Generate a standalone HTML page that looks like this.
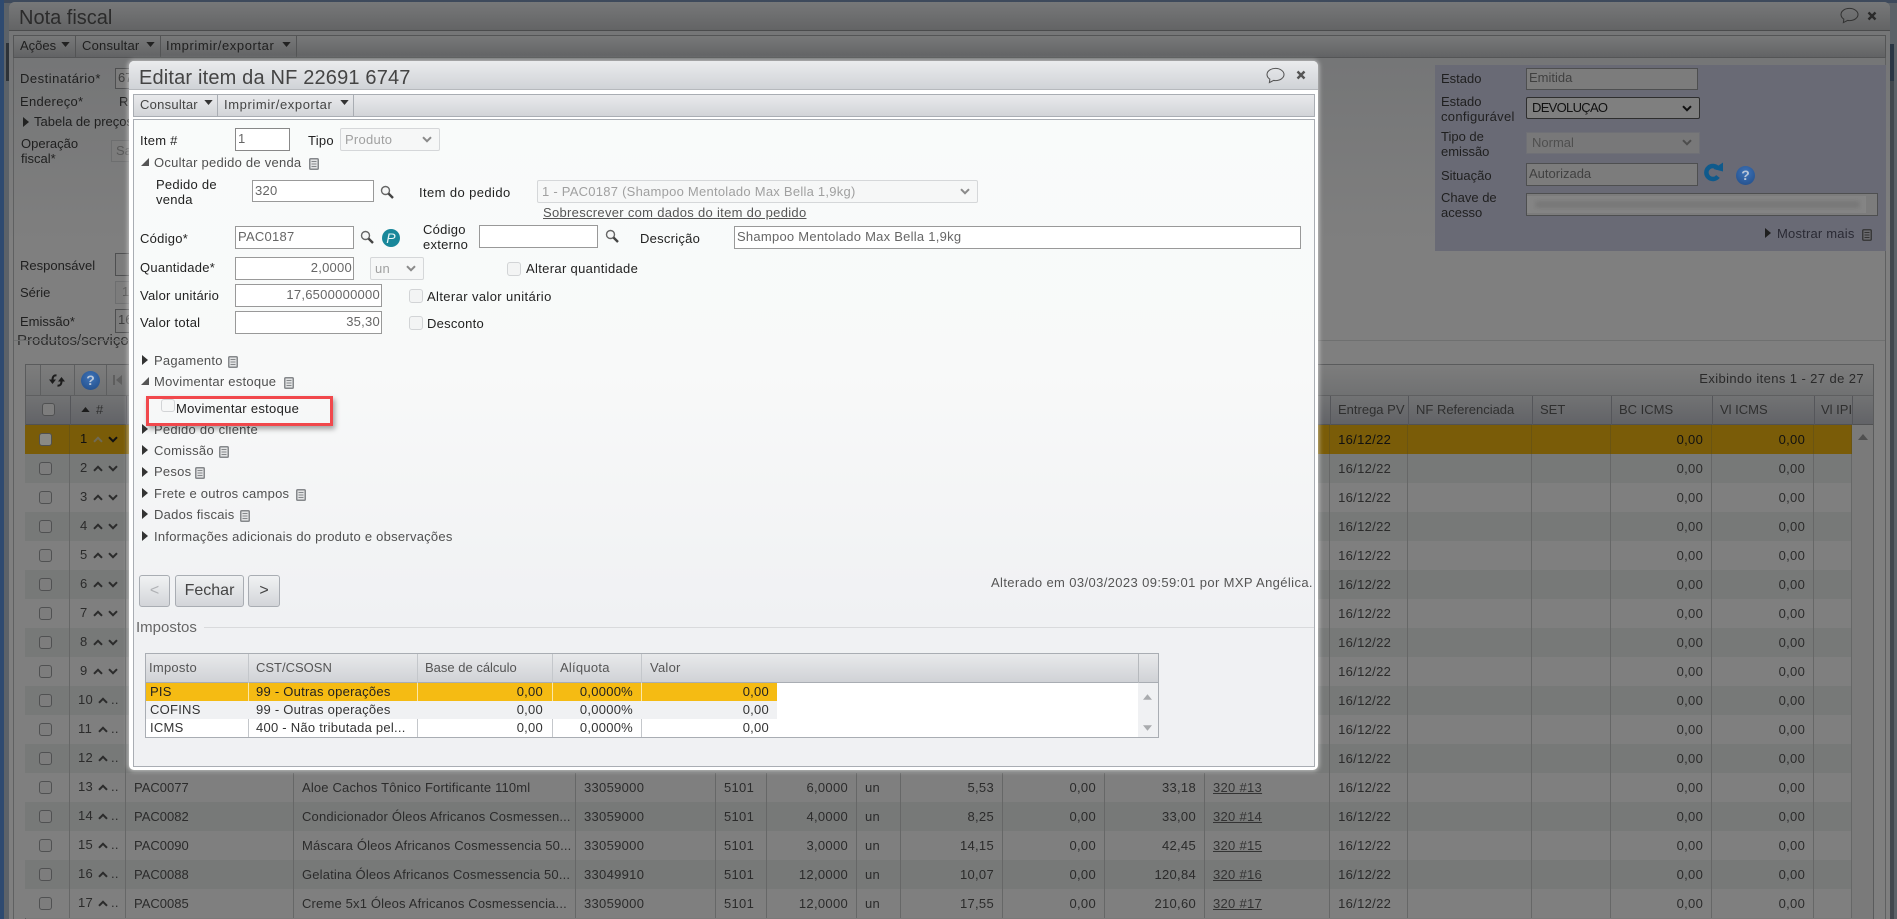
<!DOCTYPE html>
<html lang="pt-BR"><head><meta charset="utf-8"><title>Editar item da NF</title>
<style>
html,body{margin:0;padding:0;width:1897px;height:919px;overflow:hidden;background:#7f7f7f;font:13px/16px "Liberation Sans",Arial,sans-serif;color:#222;letter-spacing:.25px}
.a,.t,.in,svg.i{position:absolute}
.t{white-space:nowrap;line-height:16px}
.b{color:#1f1f1f;letter-spacing:0}
.in{box-sizing:border-box;border:1px solid #a3a6a9;background:#fff;padding-left:2px;color:#666;white-space:nowrap;overflow:hidden}
.bi{box-sizing:border-box;border:1px solid #4e4f50;background:#7c7c7c;color:#3d3d3d;padding-left:2px;position:absolute;white-space:nowrap;overflow:hidden;letter-spacing:0}
.dis{box-sizing:border-box;position:absolute;border:1px solid #d5d7d9;border-radius:2px;background:#f6f7f7;color:#a0a0a0;padding-left:4px;white-space:nowrap}
.cb{position:absolute;box-sizing:border-box;width:14px;height:14px;border:1px solid #d2d4d6;border-radius:3px;background:#f3f4f4}
.sec{color:#505050}
.grid td{box-sizing:border-box;height:29px;padding:0 8px;border-right:1px solid #666767;color:#2b2b2b;white-space:nowrap;overflow:hidden;position:relative;letter-spacing:.3px}
.grid td:nth-last-child(16){letter-spacing:0}
.grid td:nth-last-child(15){letter-spacing:.17px}
.grid td:nth-last-child(5){letter-spacing:.65px}
.grid{position:absolute;left:25px;top:425px;width:1827px;border-collapse:separate;border-spacing:0;table-layout:fixed;font-size:13px}
.grid tr:nth-child(odd){background:#7f7f7f}
.grid tr:nth-child(even){background:#777978}
.grid tr.sel{background:#7a5c08;color:#111}
.grid tr.sel td{color:#111;border-right-color:#6a5412}
.grid .r{text-align:right}
.grid u{color:#333}
.ck{position:absolute;left:14px;top:8px;width:13px;height:13px;box-sizing:border-box;border:1.5px solid #505152;border-radius:3px;background:#7d7d7d}
.sel .ck{background:#8a8a85}
.grid b{position:absolute;left:10px;top:6px;font-weight:normal}
.grid b.w{left:8px}
.grid svg{position:absolute;top:11px;width:10px;height:7px}
.grid .u{left:23px}.grid .v{left:38px}.grid .x{left:28px}
.grid em{position:absolute;left:41px;top:6px;font-style:normal}
.hd{color:#2f2f2f;letter-spacing:0}
.tx{position:absolute;left:145px;top:653px;width:1014px;height:85px;box-sizing:border-box;border:1px solid #a9adb3;background:#fff}
.tx div{position:absolute;white-space:nowrap;color:#333;line-height:18px}
.help{position:absolute;border-radius:50%;background:radial-gradient(circle at 50% 35%,#3f74b8,#1f4a86);color:#b8c6d8;font-weight:bold;text-align:center;width:19px;height:19px;line-height:19px;font-size:14px;letter-spacing:0}
.btn{position:absolute;box-sizing:border-box;top:575px;height:32px;border:1px solid #a9adb3;border-radius:3px;background:linear-gradient(#f1f2f3,#d3d5d9);text-align:center;color:#444;line-height:30px;font-size:16px;letter-spacing:0}
</style></head><body>
<svg width="0" height="0" style="position:absolute"><defs>
<symbol id="doc" viewBox="0 0 10 12"><rect x=".75" y=".75" width="8.5" height="10.5" rx="1" fill="#e2e3e4" stroke="#85888b" stroke-width="1.5"/><path d="M2.5 3.5h5M2.5 6h5M2.5 8.5h5" stroke="#85888b"/></symbol>
<symbol id="docd" viewBox="0 0 10 12"><rect x=".75" y=".75" width="8.5" height="10.5" rx="1" fill="#6a6a6e" stroke="#333" stroke-width="1.3"/><path d="M2.5 3.5h5M2.5 6h5M2.5 8.5h5" stroke="#333"/></symbol>
<symbol id="search" viewBox="0 0 14 14"><circle cx="5.5" cy="5.5" r="4" fill="#f6f7f7" stroke="#666" stroke-width="1.4"/><path d="M8.5 8.5L13 13" stroke="#444" stroke-width="2.4"/></symbol>
<symbol id="chat" viewBox="0 0 20 18"><path d="M10 1.5c-5 0-9 2.800-9 6.500 0 2 1.200 3.700 3 4.900L3.500 16.500l4.500-2.300c.7.100 1.300.2 2 .2 5 0 9-2.900 9-6.400S15 1.500 10 1.500z" fill="none" stroke="currentColor" stroke-width="1.100"/></symbol>
<symbol id="close" viewBox="0 0 10 10"><path d="M1.500 1.500l7 7M8.500 1.500l-7 7" stroke="currentColor" stroke-width="2.400"/></symbol>
<symbol id="chev" viewBox="0 0 10 7"><path d="M1 1.200l4 4 4-4" fill="none" stroke="currentColor" stroke-width="2"/></symbol>
<symbol id="up" viewBox="0 0 10 7"><path d="M1 5.800l4-4 4 4" fill="none" stroke="currentColor" stroke-width="2"/></symbol>
<symbol id="car" viewBox="0 0 10 6"><path d="M0 0h10L5 6z" fill="currentColor"/></symbol>
<symbol id="tr" viewBox="0 0 6 10"><path d="M0 0l6 5-6 5z" fill="currentColor"/></symbol>
<symbol id="te" viewBox="0 0 8 8"><path d="M8 0v8H0z" fill="currentColor"/></symbol>
</defs></svg>

<!-- page edges -->
<div class="a" style="left:0;top:0;width:1897px;height:919px;background:#5c6268"></div>
<div class="a" style="left:0;top:0;width:1897px;height:3px;background:#3e4a5c"></div>
<div class="a" style="left:0;top:0;width:4px;height:919px;background:#2e4a70"></div>
<div class="a" style="left:6px;top:43px;width:3px;height:38px;background:#2d3238"></div>
<div class="a" style="left:1890px;top:44px;width:4px;height:875px;background:#42484e"></div>
<div class="a" style="left:1890px;top:44px;width:4px;height:37px;background:#2a3644"></div>

<!-- main window -->
<div class="a" style="left:9px;top:2px;width:1881px;height:917px;background:linear-gradient(#757677 60px,#7f7f7f 240px);border-radius:6px 6px 0 0"></div>
<div class="a" style="left:9px;top:2px;width:1881px;height:28px;background:linear-gradient(#777879,#636465);border-radius:6px 6px 0 0;border-bottom:1px solid #4b4c4d"></div>
<div class="t" style="left:19px;top:6px;font-size:20px;line-height:24px;color:#2b2b2b;letter-spacing:0">Nota fiscal</div>
<svg class="i" style="left:1840px;top:7px;color:#333" width="19" height="17"><use href="#chat"/></svg>
<svg class="i" style="left:1867px;top:11px;color:#2a2a2a" width="10" height="10"><use href="#close"/></svg>
<div class="a" style="left:13px;top:35px;width:1873px;height:23px;box-sizing:border-box;border:1px solid #545556;background:linear-gradient(#787979,#626365)"></div>
<div class="a" style="left:75px;top:36px;width:1px;height:21px;background:#535455"></div>
<div class="a" style="left:160px;top:36px;width:1px;height:21px;background:#535455"></div>
<div class="a" style="left:296px;top:36px;width:1px;height:21px;background:#535455"></div>
<div class="t b" style="left:20px;top:38px">Ações</div>
<svg class="i" style="left:61px;top:42px;color:#222" width="9" height="5"><use href="#car"/></svg>
<div class="t b" style="left:82px;top:38px;letter-spacing:.2px">Consultar</div>
<svg class="i" style="left:146px;top:42px;color:#222" width="9" height="5"><use href="#car"/></svg>
<div class="t b" style="left:166px;top:38px;letter-spacing:.6px">Imprimir/exportar</div>
<svg class="i" style="left:282px;top:42px;color:#222" width="9" height="5"><use href="#car"/></svg>

<!-- left form (dimmed) -->
<div class="t b" style="left:20px;top:71px;letter-spacing:.5px">Destinatário*</div>
<div class="bi" style="left:115px;top:68px;width:60px;height:21px;line-height:17px">67</div>
<div class="t b" style="left:20px;top:94px;letter-spacing:.3px">Endereço*</div>
<div class="t b" style="left:119px;top:94px">R</div>
<svg class="i" style="left:23px;top:117px;color:#222" width="6" height="10"><use href="#tr"/></svg>
<div class="t b" style="left:34px;top:114px">Tabela de preços</div>
<div class="t b" style="left:21px;top:136px">Operação</div>
<div class="t b" style="left:21px;top:151px">fiscal*</div>
<div class="bi" style="left:111px;top:140px;width:60px;height:22px;line-height:20px;color:#595959;border-color:#6d6e6f;padding-left:4px">Sa</div>
<div class="t b" style="left:20px;top:258px">Responsável</div>
<div class="bi" style="left:115px;top:253px;width:60px;height:23px"></div>
<div class="t b" style="left:20px;top:285px">Série</div>
<div class="bi" style="left:115px;top:281px;width:60px;height:23px;color:#555;padding-left:6px;border-color:#6d6e6f;line-height:20px">1</div>
<div class="t b" style="left:20px;top:314px">Emissão*</div>
<div class="bi" style="left:115px;top:309px;width:60px;height:24px;line-height:20px">16</div>
<div class="t" style="left:17px;top:332px;font-size:15px;line-height:18px;color:#2f2f2f;letter-spacing:0">Produtos/serviços</div>
<div class="a" style="left:13px;top:340px;width:1873px;height:1px;background:#6f7070"></div>
<div class="a" style="left:13px;top:58px;width:1px;height:861px;background:#5f6061"></div>
<div class="a" style="left:1885px;top:58px;width:1px;height:861px;background:#5f6061"></div>

<!-- right panel -->
<div class="a" style="left:1435px;top:65px;width:451px;height:186px;background:#696a75"></div>
<div class="t b" style="left:1441px;top:71px">Estado</div>
<div class="bi" style="left:1526px;top:68px;width:172px;height:22px;line-height:18px;color:#404040">Emitida</div>
<div class="t b" style="left:1441px;top:94px">Estado</div>
<div class="t b" style="left:1441px;top:109px;letter-spacing:.3px">configurável</div>
<div class="a" style="left:1526px;top:97px;width:174px;height:22px;box-sizing:border-box;border:1px solid #2e2e2e;border-radius:2px;background:#7f7f7f;padding-left:5px;line-height:20px;color:#111;letter-spacing:-.7px">DEVOLUÇAO</div>
<svg class="i" style="left:1682px;top:105px;color:#111" width="10" height="7"><use href="#chev"/></svg>
<div class="t b" style="left:1441px;top:129px">Tipo de</div>
<div class="t b" style="left:1441px;top:144px">emissão</div>
<div class="a" style="left:1526px;top:132px;width:174px;height:22px;box-sizing:border-box;border:1px solid #6f7076;background:#787879;padding-left:5px;line-height:20px;color:#4f4f4f;letter-spacing:0">Normal</div>
<svg class="i" style="left:1682px;top:139px;color:#4d4d4d" width="10" height="7"><use href="#chev"/></svg>
<div class="t b" style="left:1441px;top:168px">Situação</div>
<div class="bi" style="left:1526px;top:163px;width:172px;height:23px;line-height:19px;color:#404040">Autorizada</div>
<svg class="i" style="left:1703px;top:162px" width="20" height="20" viewBox="0 0 20 20"><path d="M15 6.500A6.500 6.500 0 1 0 15 14.500" fill="none" stroke="#0f5a8c" stroke-width="4.500"/><path d="M10.500 7L20 9.500V.5z" fill="#0f5a8c"/></svg>
<div class="help" style="left:1736px;top:166px">?</div>
<div class="t b" style="left:1441px;top:190px">Chave de</div>
<div class="t b" style="left:1441px;top:205px">acesso</div>
<div class="bi" style="left:1526px;top:193px;width:352px;height:23px;padding:0"><div class="a" style="left:0;top:2px;width:339px;height:17px;background:#858585"></div><div class="a" style="left:8px;top:7px;width:325px;height:7px;background:#777;filter:blur(2.5px)"></div></div>
<svg class="i" style="left:1765px;top:228px;color:#1f1f1f" width="6" height="10"><use href="#tr"/></svg>
<div class="t b" style="left:1777px;top:226px;color:#2a2a34;letter-spacing:.2px">Mostrar mais</div>
<svg class="i" style="left:1862px;top:229px" width="10" height="12"><use href="#docd"/></svg>

<!-- main grid -->
<div class="a" style="left:25px;top:364px;width:1849px;height:555px;box-sizing:border-box;border:1px solid #5a5b5c;border-bottom:0;background:#7a7a7a"></div>
<div class="a" style="left:26px;top:365px;width:1847px;height:30px;background:linear-gradient(#7d7d7d,#707172);border-bottom:1px solid #5e5f60"></div>
<div class="a" style="left:40px;top:365px;width:1px;height:30px;background:#5e5f60"></div>
<div class="a" style="left:74px;top:365px;width:1px;height:30px;background:#5e5f60"></div>
<div class="a" style="left:106px;top:365px;width:1px;height:30px;background:#5e5f60"></div>
<svg class="i" style="left:49px;top:373px" width="16" height="15" viewBox="0 0 16 15"><path d="M7.500 2.500C5 2 3.500 3.500 3.500 7" fill="none" stroke="#1c1c1c" stroke-width="2"/><path d="M0 6.500h7L3.500 11zM9 8.500h7L12.500 4z" fill="#1c1c1c"/><path d="M8.500 12.500c2.500.5 4-1 4-4.500" fill="none" stroke="#1c1c1c" stroke-width="2"/></svg>
<div class="help" style="left:81px;top:371px">?</div>
<svg class="i" style="left:113px;top:375px" width="9" height="10" viewBox="0 0 9 10"><path d="M0 0h2v10H0zM9 0v10L3 5z" fill="#5e5e5e"/></svg>
<div class="t" style="right:33px;top:371px;color:#2a2a2a;letter-spacing:.4px">Exibindo itens 1 - 27 de 27</div>
<div class="a" style="left:26px;top:396px;width:1847px;height:29px;background:linear-gradient(#727374,#626367);border-bottom:1px solid #515253;box-sizing:border-box"></div>
<div class="a" style="left:70px;top:396px;width:1px;height:29px;background:#55565a"></div>
<div class="a" style="left:126px;top:396px;width:1px;height:29px;background:#55565a"></div>
<div class="a" style="left:1330px;top:396px;width:1px;height:29px;background:#55565a"></div>
<div class="a" style="left:1408px;top:396px;width:1px;height:29px;background:#55565a"></div>
<div class="a" style="left:1532px;top:396px;width:1px;height:29px;background:#55565a"></div>
<div class="a" style="left:1611px;top:396px;width:1px;height:29px;background:#55565a"></div>
<div class="a" style="left:1712px;top:396px;width:1px;height:29px;background:#55565a"></div>
<div class="a" style="left:1814px;top:396px;width:1px;height:29px;background:#55565a"></div>
<div class="a" style="left:1852px;top:396px;width:1px;height:29px;background:#55565a"></div>
<div class="a" style="left:42px;top:403px;width:13px;height:13px;box-sizing:border-box;border:1.5px solid #505152;border-radius:3px;background:#7d7d7d"></div>
<svg class="i" style="left:81px;top:407px;color:#1c1c1c" width="9" height="5" viewBox="0 0 10 6"><path d="M0 6h10L5 0z" fill="currentColor"/></svg>
<div class="t hd" style="left:96px;top:402px">#</div>
<div class="t hd" style="left:1338px;top:402px">Entrega PV</div>
<div class="t hd" style="left:1416px;top:402px">NF Referenciada</div>
<div class="t hd" style="left:1540px;top:402px">SET</div>
<div class="t hd" style="left:1619px;top:402px">BC ICMS</div>
<div class="t hd" style="left:1720px;top:402px">Vl ICMS</div>
<div class="a" style="left:1821px;top:402px;width:31px;height:16px;overflow:hidden;white-space:nowrap;color:#2f2f2f;letter-spacing:0">Vl IPI</div>
<svg class="i" style="left:1858px;top:434px;color:#505050" width="10" height="6" viewBox="0 0 10 6"><path d="M0 6h10L5 0z" fill="currentColor"/></svg>

<table class="grid">
<colgroup><col style="width:45px"><col style="width:56px"><col style="width:168px"><col style="width:282px"><col style="width:140px"><col style="width:51px"><col style="width:90px"><col style="width:44px"><col style="width:102px"><col style="width:102px"><col style="width:100px"><col style="width:125px"><col style="width:78px"><col style="width:124px"><col style="width:79px"><col style="width:101px"><col style="width:102px"><col style="width:38px"></colgroup>
<tr class="sel"><td><i class="ck"></i></td><td><b>1</b><svg class="u" style="color:#6f6a55"><use href="#up"/></svg><svg class="v" style="color:#111"><use href="#chev"/></svg></td><td colspan="10"></td><td>16/12/22</td><td></td><td></td><td class="r">0,00</td><td class="r">0,00</td><td></td></tr>
<tr><td><i class="ck"></i></td><td><b>2</b><svg class="u"><use href="#up"/></svg><svg class="v"><use href="#chev"/></svg></td><td colspan="10"></td><td>16/12/22</td><td></td><td></td><td class="r">0,00</td><td class="r">0,00</td><td></td></tr>
<tr><td><i class="ck"></i></td><td><b>3</b><svg class="u"><use href="#up"/></svg><svg class="v"><use href="#chev"/></svg></td><td colspan="10"></td><td>16/12/22</td><td></td><td></td><td class="r">0,00</td><td class="r">0,00</td><td></td></tr>
<tr><td><i class="ck"></i></td><td><b>4</b><svg class="u"><use href="#up"/></svg><svg class="v"><use href="#chev"/></svg></td><td colspan="10"></td><td>16/12/22</td><td></td><td></td><td class="r">0,00</td><td class="r">0,00</td><td></td></tr>
<tr><td><i class="ck"></i></td><td><b>5</b><svg class="u"><use href="#up"/></svg><svg class="v"><use href="#chev"/></svg></td><td colspan="10"></td><td>16/12/22</td><td></td><td></td><td class="r">0,00</td><td class="r">0,00</td><td></td></tr>
<tr><td><i class="ck"></i></td><td><b>6</b><svg class="u"><use href="#up"/></svg><svg class="v"><use href="#chev"/></svg></td><td colspan="10"></td><td>16/12/22</td><td></td><td></td><td class="r">0,00</td><td class="r">0,00</td><td></td></tr>
<tr><td><i class="ck"></i></td><td><b>7</b><svg class="u"><use href="#up"/></svg><svg class="v"><use href="#chev"/></svg></td><td colspan="10"></td><td>16/12/22</td><td></td><td></td><td class="r">0,00</td><td class="r">0,00</td><td></td></tr>
<tr><td><i class="ck"></i></td><td><b>8</b><svg class="u"><use href="#up"/></svg><svg class="v"><use href="#chev"/></svg></td><td colspan="10"></td><td>16/12/22</td><td></td><td></td><td class="r">0,00</td><td class="r">0,00</td><td></td></tr>
<tr><td><i class="ck"></i></td><td><b>9</b><svg class="u"><use href="#up"/></svg><svg class="v"><use href="#chev"/></svg></td><td colspan="10"></td><td>16/12/22</td><td></td><td></td><td class="r">0,00</td><td class="r">0,00</td><td></td></tr>
<tr><td><i class="ck"></i></td><td><b class="w">10</b><svg class="x"><use href="#up"/></svg><em>..</em></td><td colspan="10"></td><td>16/12/22</td><td></td><td></td><td class="r">0,00</td><td class="r">0,00</td><td></td></tr>
<tr><td><i class="ck"></i></td><td><b class="w">11</b><svg class="x"><use href="#up"/></svg><em>..</em></td><td colspan="10"></td><td>16/12/22</td><td></td><td></td><td class="r">0,00</td><td class="r">0,00</td><td></td></tr>
<tr><td><i class="ck"></i></td><td><b class="w">12</b><svg class="x"><use href="#up"/></svg><em>..</em></td><td colspan="10"></td><td>16/12/22</td><td></td><td></td><td class="r">0,00</td><td class="r">0,00</td><td></td></tr>
<tr><td><i class="ck"></i></td><td><b class="w">13</b><svg class="x"><use href="#up"/></svg><em>..</em></td><td>PAC0077</td><td>Aloe Cachos Tônico Fortificante 110ml</td><td>33059000</td><td>5101</td><td class="r">6,0000</td><td>un</td><td class="r">5,53</td><td class="r">0,00</td><td class="r">33,18</td><td><u>320 #13</u></td><td>16/12/22</td><td></td><td></td><td class="r">0,00</td><td class="r">0,00</td><td></td></tr>
<tr><td><i class="ck"></i></td><td><b class="w">14</b><svg class="x"><use href="#up"/></svg><em>..</em></td><td>PAC0082</td><td>Condicionador Óleos Africanos Cosmessen...</td><td>33059000</td><td>5101</td><td class="r">4,0000</td><td>un</td><td class="r">8,25</td><td class="r">0,00</td><td class="r">33,00</td><td><u>320 #14</u></td><td>16/12/22</td><td></td><td></td><td class="r">0,00</td><td class="r">0,00</td><td></td></tr>
<tr><td><i class="ck"></i></td><td><b class="w">15</b><svg class="x"><use href="#up"/></svg><em>..</em></td><td>PAC0090</td><td>Máscara Óleos Africanos Cosmessencia 50...</td><td>33059000</td><td>5101</td><td class="r">3,0000</td><td>un</td><td class="r">14,15</td><td class="r">0,00</td><td class="r">42,45</td><td><u>320 #15</u></td><td>16/12/22</td><td></td><td></td><td class="r">0,00</td><td class="r">0,00</td><td></td></tr>
<tr><td><i class="ck"></i></td><td><b class="w">16</b><svg class="x"><use href="#up"/></svg><em>..</em></td><td>PAC0088</td><td>Gelatina Óleos Africanos Cosmessencia 50...</td><td>33049910</td><td>5101</td><td class="r">12,0000</td><td>un</td><td class="r">10,07</td><td class="r">0,00</td><td class="r">120,84</td><td><u>320 #16</u></td><td>16/12/22</td><td></td><td></td><td class="r">0,00</td><td class="r">0,00</td><td></td></tr>
<tr><td><i class="ck"></i></td><td><b class="w">17</b><svg class="x"><use href="#up"/></svg><em>..</em></td><td>PAC0085</td><td>Creme 5x1 Óleos Africanos Cosmessencia...</td><td>33059000</td><td>5101</td><td class="r">12,0000</td><td>un</td><td class="r">17,55</td><td class="r">0,00</td><td class="r">210,60</td><td><u>320 #17</u></td><td>16/12/22</td><td></td><td></td><td class="r">0,00</td><td class="r">0,00</td><td></td></tr>
</table>

<!-- dialog -->
<div class="a" style="left:129px;top:61px;width:1189px;height:709px;background:#fff;border-radius:5px;box-shadow:0 0 5px 1px rgba(255,255,255,.55)"></div>
<div class="a" style="left:129px;top:61px;width:1189px;height:28px;background:linear-gradient(#eaebed,#d0d3d7);border-radius:5px 5px 0 0;border-bottom:1px solid #b6b9bd"></div>
<div class="t" style="left:139px;top:66px;font-size:20px;line-height:24px;letter-spacing:.17px;color:#444">Editar item da NF 22691 6747</div>
<svg class="i" style="left:1266px;top:67px;color:#555" width="19" height="17"><use href="#chat"/></svg>
<svg class="i" style="left:1296px;top:70px;color:#555" width="10" height="10"><use href="#close"/></svg>
<div class="a" style="left:133px;top:94px;width:1182px;height:23px;box-sizing:border-box;border:1px solid #a9adb3;background:linear-gradient(#e9eaec,#d2d4d8)"></div>
<div class="a" style="left:217px;top:95px;width:1px;height:21px;background:#a9adb3"></div>
<div class="a" style="left:353px;top:95px;width:1px;height:21px;background:#a9adb3"></div>
<div class="t" style="left:140px;top:97px;color:#444">Consultar</div>
<svg class="i" style="left:204px;top:100px;color:#333" width="9" height="5"><use href="#car"/></svg>
<div class="t" style="left:224px;top:97px;color:#444;letter-spacing:.6px">Imprimir/exportar</div>
<svg class="i" style="left:340px;top:100px;color:#333" width="9" height="5"><use href="#car"/></svg>
<div class="a" style="left:133px;top:119px;width:1182px;height:648px;box-sizing:border-box;border:1px solid #a9adb3;background:linear-gradient(#f9fbfa 0,#f8f9f9 250px,#f0f1f3 500px)"></div>

<div class="t" style="left:140px;top:133px">Item #</div>
<div class="in" style="left:235px;top:128px;width:55px;height:23px;line-height:19px;border-color:#888">1</div>
<div class="t" style="left:308px;top:133px">Tipo</div>
<div class="dis" style="left:340px;top:128px;width:100px;height:23px;line-height:21px">Produto</div>
<svg class="i" style="left:422px;top:136px;color:#8a8a8a" width="10" height="7"><use href="#chev"/></svg>
<svg class="i" style="left:141px;top:158px;color:#555" width="8" height="8"><use href="#te"/></svg>
<div class="t sec" style="left:154px;top:155px">Ocultar pedido de venda</div>
<svg class="i" style="left:309px;top:158px" width="10" height="12"><use href="#doc"/></svg>

<div class="t" style="left:156px;top:177px">Pedido de</div>
<div class="t" style="left:156px;top:192px">venda</div>
<div class="in" style="left:252px;top:180px;width:122px;height:22px;line-height:19px;border-color:#999">320</div>
<svg class="i" style="left:380px;top:185px" width="14" height="14"><use href="#search"/></svg>
<div class="t" style="left:419px;top:185px;letter-spacing:.4px">Item do pedido</div>
<div class="dis" style="left:537px;top:180px;width:441px;height:23px;line-height:21px">1 - PAC0187 (Shampoo Mentolado Max Bella 1,9kg)</div>
<svg class="i" style="left:960px;top:188px;color:#8a8a8a" width="10" height="7"><use href="#chev"/></svg>
<div class="t" style="left:543px;top:205px;color:#555;text-decoration:underline;letter-spacing:.3px">Sobrescrever com dados do item do pedido</div>

<div class="t" style="left:140px;top:231px">Código*</div>
<div class="in" style="left:235px;top:226px;width:119px;height:23px;line-height:19px;border-color:#999">PAC0187</div>
<svg class="i" style="left:360px;top:230px" width="14" height="14"><use href="#search"/></svg>
<div class="a" style="left:382px;top:229px;width:18px;height:18px;border-radius:50%;background:#18879a;color:#e6f5f6;text-align:center;line-height:18px;font-style:italic;font-size:14px">P</div>
<div class="t" style="left:423px;top:222px">Código</div>
<div class="t" style="left:423px;top:237px">externo</div>
<div class="in" style="left:479px;top:225px;width:119px;height:23px;border-color:#999"></div>
<svg class="i" style="left:605px;top:229px" width="14" height="14"><use href="#search"/></svg>
<div class="t" style="left:640px;top:231px">Descrição</div>
<div class="in" style="left:734px;top:226px;width:567px;height:23px;line-height:19px;border-color:#999">Shampoo Mentolado Max Bella 1,9kg</div>

<div class="t" style="left:140px;top:260px">Quantidade*</div>
<div class="in" style="left:235px;top:257px;width:119px;height:23px;line-height:19px;text-align:right;padding:0 1px;border-color:#999">2,0000</div>
<div class="dis" style="left:370px;top:257px;width:54px;height:23px;line-height:21px">un</div>
<svg class="i" style="left:406px;top:265px;color:#8a8a8a" width="10" height="7"><use href="#chev"/></svg>
<i class="cb" style="left:507px;top:262px"></i>
<div class="t" style="left:526px;top:261px;letter-spacing:.33px">Alterar quantidade</div>

<div class="t" style="left:140px;top:288px">Valor unitário</div>
<div class="in" style="left:235px;top:284px;width:147px;height:23px;line-height:19px;text-align:right;padding:0 1px;border-color:#999">17,6500000000</div>
<i class="cb" style="left:409px;top:289px"></i>
<div class="t" style="left:427px;top:289px;letter-spacing:.38px">Alterar valor unitário</div>
<div class="t" style="left:140px;top:315px">Valor total</div>
<div class="in" style="left:235px;top:311px;width:147px;height:23px;line-height:19px;text-align:right;padding:0 1px;border-color:#999">35,30</div>
<i class="cb" style="left:409px;top:316px"></i>
<div class="t" style="left:427px;top:316px">Desconto</div>

<svg class="i" style="left:142px;top:355px;color:#333" width="6" height="10"><use href="#tr"/></svg>
<div class="t sec" style="left:154px;top:353px">Pagamento</div>
<svg class="i" style="left:228px;top:356px" width="10" height="12"><use href="#doc"/></svg>
<svg class="i" style="left:141px;top:377px;color:#555" width="8" height="8"><use href="#te"/></svg>
<div class="t sec" style="left:154px;top:374px">Movimentar estoque</div>
<svg class="i" style="left:284px;top:377px" width="10" height="12"><use href="#doc"/></svg>
<svg class="i" style="left:142px;top:424px;color:#333" width="6" height="10"><use href="#tr"/></svg>
<div class="t sec" style="left:154px;top:422px">Pedido do cliente</div>
<svg class="i" style="left:142px;top:445px;color:#333" width="6" height="10"><use href="#tr"/></svg>
<div class="t sec" style="left:154px;top:443px">Comissão</div>
<svg class="i" style="left:219px;top:446px" width="10" height="12"><use href="#doc"/></svg>
<svg class="i" style="left:142px;top:467px;color:#333" width="6" height="10"><use href="#tr"/></svg>
<div class="t sec" style="left:154px;top:464px">Pesos</div>
<svg class="i" style="left:195px;top:467px" width="10" height="12"><use href="#doc"/></svg>
<svg class="i" style="left:142px;top:488px;color:#333" width="6" height="10"><use href="#tr"/></svg>
<div class="t sec" style="left:154px;top:486px">Frete e outros campos</div>
<svg class="i" style="left:296px;top:489px" width="10" height="12"><use href="#doc"/></svg>
<svg class="i" style="left:142px;top:509px;color:#333" width="6" height="10"><use href="#tr"/></svg>
<div class="t sec" style="left:154px;top:507px">Dados fiscais</div>
<svg class="i" style="left:240px;top:510px" width="10" height="12"><use href="#doc"/></svg>
<svg class="i" style="left:142px;top:531px;color:#333" width="6" height="10"><use href="#tr"/></svg>
<div class="t sec" style="left:154px;top:529px">Informações adicionais do produto e observações</div>

<i class="cb" style="left:161px;top:399px;height:13px;background:#f6f7f7"></i>
<div class="t" style="left:176px;top:401px;color:#222;letter-spacing:.3px">Movimentar estoque</div>
<div class="a" style="left:146px;top:396px;width:187px;height:30px;box-sizing:border-box;border:3px solid #f1484c;box-shadow:2px 3px 5px rgba(0,0,0,.35)"></div>

<div class="btn" style="left:139px;width:31px;color:#b0b2b5">&lt;</div>
<div class="btn" style="left:175px;width:69px">Fechar</div>
<div class="btn" style="left:248px;width:32px">&gt;</div>
<div class="t" style="left:991px;top:575px;color:#555;letter-spacing:.38px">Alterado em 03/03/2023 09:59:01 por MXP Angélica.</div>

<div class="t" style="left:136px;top:620px;font-size:15px;color:#666;letter-spacing:0">Impostos</div>
<div class="a" style="left:204px;top:627px;width:1110px;height:1px;background:#d9dadc"></div>

<div class="tx">
<div style="left:0;top:0;width:1012px;height:29px;background:linear-gradient(#e8e9eb,#d0d2d6);border-bottom:1px solid #a9adb3;box-sizing:border-box"></div>
<div style="left:102px;top:0;width:1px;height:83px;background:#c4c7cb"></div>
<div style="left:271px;top:0;width:1px;height:83px;background:#c4c7cb"></div>
<div style="left:406px;top:0;width:1px;height:83px;background:#c4c7cb"></div>
<div style="left:495px;top:0;width:1px;height:83px;background:#c4c7cb"></div>
<div style="left:992px;top:0;width:1px;height:29px;background:#b6b9bd"></div>
<div style="left:3px;top:5px;color:#555">Imposto</div>
<div style="left:110px;top:5px;color:#555;letter-spacing:0">CST/CSOSN</div>
<div style="left:279px;top:5px;color:#555;letter-spacing:0">Base de cálculo</div>
<div style="left:414px;top:5px;color:#555">Alíquota</div>
<div style="left:504px;top:5px;color:#555">Valor</div>
<div style="left:0;top:29px;width:631px;height:18px;background:#f5bb13"></div>
<div style="left:0;top:47px;width:631px;height:18px;background:#f0f1f3"></div>
<div style="left:102px;top:29px;width:1px;height:18px;background:#fbe7a8"></div>
<div style="left:271px;top:29px;width:1px;height:18px;background:#fbe7a8"></div>
<div style="left:406px;top:29px;width:1px;height:18px;background:#fbe7a8"></div>
<div style="left:495px;top:29px;width:1px;height:18px;background:#fbe7a8"></div>
<div style="left:992px;top:29px;width:20px;height:54px;background:#f0f1f3"></div>
<div style="left:4px;top:29px;color:#222">PIS</div><div style="left:110px;top:29px;color:#222">99 - Outras operações</div><div style="right:615px;top:29px;color:#222">0,00</div><div style="right:525px;top:29px;color:#222">0,0000%</div><div style="right:389px;top:29px;color:#222">0,00</div>
<div style="left:4px;top:47px">COFINS</div><div style="left:110px;top:47px">99 - Outras operações</div><div style="right:615px;top:47px">0,00</div><div style="right:525px;top:47px">0,0000%</div><div style="right:389px;top:47px">0,00</div>
<div style="left:4px;top:65px">ICMS</div><div style="left:110px;top:65px">400 - Não tributada pel...</div><div style="right:615px;top:65px">0,00</div><div style="right:525px;top:65px">0,0000%</div><div style="right:389px;top:65px">0,00</div>
<svg style="position:absolute;left:997px;top:40px;color:#a9abae" width="9" height="6" viewBox="0 0 10 6"><path d="M0 6h10L5 0z" fill="currentColor"/></svg>
<svg style="position:absolute;left:997px;top:71px;color:#a9abae" width="9" height="6"><use href="#car"/></svg>
</div>
</body></html>
